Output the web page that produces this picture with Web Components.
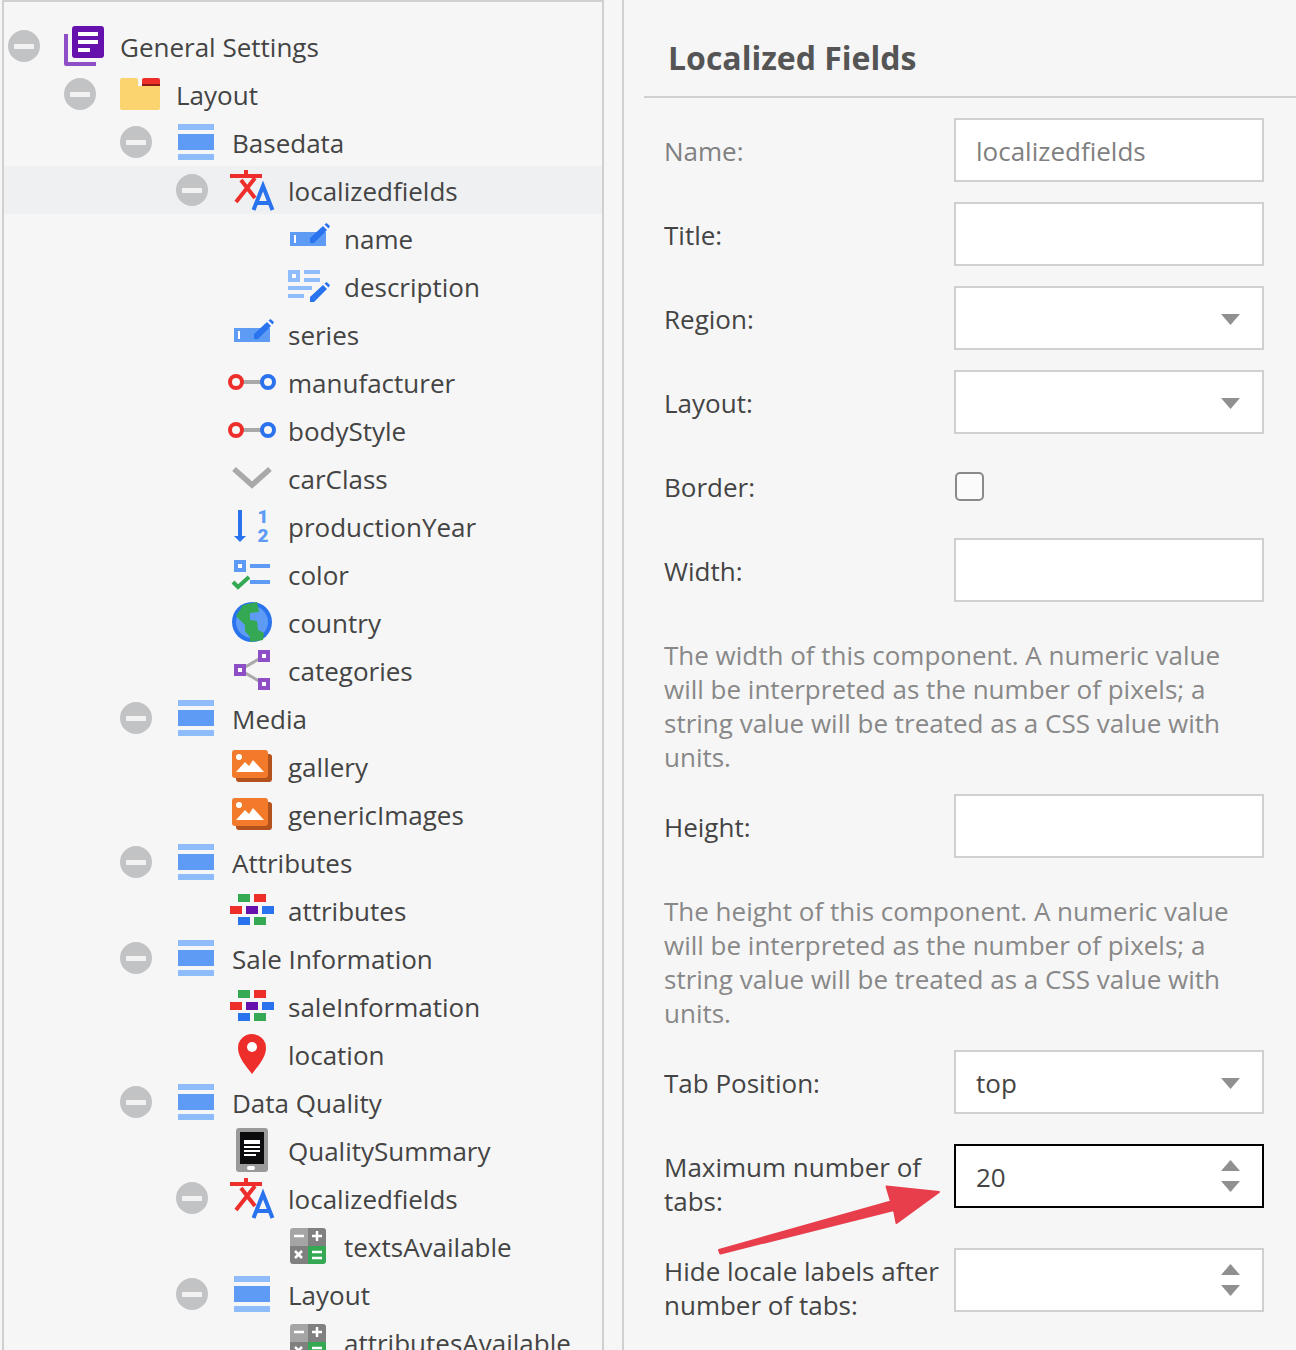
<!DOCTYPE html>
<html>
<head>
<meta charset="utf-8">
<title>Localized Fields</title>
<style>
  html, body { margin: 0; height: 1350px; overflow: hidden; background: #f6f6f6; }
  body { font-family: "Open Sans", "Liberation Sans", sans-serif; color: #444; }
</style>
</head>
<body>
<app-shell>
  <tree-panel slot="tree">
    <tree-row level="0" icon="book" toggle>General Settings</tree-row>
    <tree-row level="1" icon="folder" toggle>Layout</tree-row>
    <tree-row level="2" icon="form" toggle>Basedata</tree-row>
    <tree-row level="3" icon="translate" toggle selected>localizedfields</tree-row>
    <tree-row level="4" icon="input">name</tree-row>
    <tree-row level="4" icon="textarea">description</tree-row>
    <tree-row level="3" icon="input">series</tree-row>
    <tree-row level="3" icon="relation">manufacturer</tree-row>
    <tree-row level="3" icon="relation">bodyStyle</tree-row>
    <tree-row level="3" icon="chevron">carClass</tree-row>
    <tree-row level="3" icon="sort">productionYear</tree-row>
    <tree-row level="3" icon="checklist">color</tree-row>
    <tree-row level="3" icon="globe">country</tree-row>
    <tree-row level="3" icon="share">categories</tree-row>
    <tree-row level="2" icon="form" toggle>Media</tree-row>
    <tree-row level="3" icon="picture">gallery</tree-row>
    <tree-row level="3" icon="picture">genericImages</tree-row>
    <tree-row level="2" icon="form" toggle>Attributes</tree-row>
    <tree-row level="3" icon="blocks">attributes</tree-row>
    <tree-row level="2" icon="form" toggle>Sale Information</tree-row>
    <tree-row level="3" icon="blocks">saleInformation</tree-row>
    <tree-row level="3" icon="pin">location</tree-row>
    <tree-row level="2" icon="form" toggle>Data Quality</tree-row>
    <tree-row level="3" icon="tablet">QualitySummary</tree-row>
    <tree-row level="3" icon="translate" toggle>localizedfields</tree-row>
    <tree-row level="4" icon="calc">textsAvailable</tree-row>
    <tree-row level="3" icon="form" toggle>Layout</tree-row>
    <tree-row level="4" icon="calc">attributesAvailable</tree-row>
  </tree-panel>
  <form-panel slot="form" heading="Localized Fields">
    <form-row label="Name:" disabled><form-field value="localizedfields" disabled></form-field></form-row>
    <form-row label="Title:"><form-field></form-field></form-row>
    <form-row label="Region:"><form-field kind="select"></form-field></form-row>
    <form-row label="Layout:"><form-field kind="select"></form-field></form-row>
    <form-row label="Border:"><form-field kind="check"></form-field></form-row>
    <form-row label="Width:"><form-field></form-field></form-row>
    <help-text>The width of this component. A numeric value will be interpreted as the number of pixels; a string value will be treated as a CSS value with units.</help-text>
    <form-row label="Height:"><form-field></form-field></form-row>
    <help-text>The height of this component. A numeric value will be interpreted as the number of pixels; a string value will be treated as a CSS value with units.</help-text>
    <form-row label="Tab Position:" style="margin-bottom:30px"><form-field kind="select" value="top"></form-field></form-row>
    <form-row label="Maximum number of tabs:" two><form-field kind="spin" value="20" focused></form-field></form-row>
    <form-row label="Hide locale labels after number of tabs:" two><form-field kind="spin"></form-field></form-row>
    <callout-arrow></callout-arrow>
  </form-panel>
</app-shell>

<script>
// all icons share a 48x48 box at the start of the icon column
const LIGHT = '#8fbcfa', MID = '#5e9bf5', BLUE = '#2a73ee', RED = '#ee2e2a', GREEN = '#34a853', PURPLE = '#8e4ec6', GREY = '#a9a9a9';

const pencil = (x, y) => `<g transform="translate(${x} ${y})" fill="${BLUE}">
  <polygon points="0,20 0,15 13,3 17,7 4,20"/><polygon points="14.500,1.500 16.500,0 20,3 18.500,5.500"/></g>`;

const purpleBox = (x, y) => `<rect x="${x}" y="${y}" width="12" height="12" fill="${PURPLE}"/><rect x="${x + 4}" y="${y + 4}" width="4" height="4" fill="#fff"/>`;

const blocks = (mid) => `<rect x="6" y="8" width="12" height="8" fill="${GREEN}"/><rect x="22" y="8" width="12" height="8" fill="${RED}"/>
  <rect x="-2" y="20" width="12" height="8" fill="${RED}"/><rect x="14" y="20" width="12" height="8" fill="${mid}"/><rect x="30" y="20" width="12" height="8" fill="${BLUE}"/>
  <rect x="6" y="31" width="12" height="8" fill="${BLUE}"/><rect x="22" y="31" width="12" height="8" fill="${GREEN}"/>`;

const ICONS = {
  book: `<rect x="8" y="4" width="32" height="32" rx="3" fill="#6610ad"/>
    <path d="M14 10h20v4H14zM14 18h20v4H14zM14 26h12v4H14z" fill="#fff"/>
    <path d="M0 12h4v28h28v4H2a2 2 0 0 1-2-2z" fill="${PURPLE}"/>`,
  folder: `<path d="M2 8h14a2 2 0 0 1 2 2v6h22v22a2 2 0 0 1-2 2H2a2 2 0 0 1-2-2V10a2 2 0 0 1 2-2z" fill="#fbd46f"/>
    <path d="M22 14V10a2 2 0 0 1 2-2h14a2 2 0 0 1 2 2v4z" fill="${RED}"/><rect x="22" y="14" width="18" height="2" fill="#8c1a14"/>`,
  form: `<rect x="2" y="6" width="36" height="6" fill="${LIGHT}"/><rect x="2" y="16" width="36" height="16" fill="${MID}"/><rect x="2" y="36" width="36" height="6" fill="${LIGHT}"/>`,
  translate: `<rect x="-2" y="8" width="32" height="4" fill="${RED}"/><rect x="12" y="4" width="4" height="4" fill="${RED}"/>
    <path d="M23 12 4 36M9 14l14 18" fill="none" stroke="${RED}" stroke-width="4"/>
    <path d="M21.500 44 31 20l9.500 24M25 37h12" fill="none" stroke="${BLUE}" stroke-width="4"/>`,
  input: `<rect x="2" y="18" width="36" height="14" fill="${MID}"/><rect x="6" y="21" width="2" height="8" fill="#fff"/>${pencil(22, 9)}`,
  textarea: `<rect x="0" y="8" width="12" height="12" fill="${LIGHT}"/><rect x="4" y="12" width="4" height="4" fill="#fff"/>
    <path d="M16 8h16v4H16zM16 16h16v4H16zM0 24h24v4H0zM0 32h16v4H0z" fill="${LIGHT}"/>${pencil(22, 20)}`,
  relation: `<rect x="10" y="22" width="20" height="4" fill="${GREY}"/>
    <circle cx="4" cy="24" r="6" fill="none" stroke="${RED}" stroke-width="4"/><circle cx="36" cy="24" r="6" fill="none" stroke="${BLUE}" stroke-width="4"/>`,
  chevron: `<path d="M2 15l18 16 18-16" fill="none" stroke="${GREY}" stroke-width="5.500"/>`,
  sort: `<rect x="6" y="8" width="4" height="28" fill="${BLUE}"/><polygon points="2,34 14,34 8,40" fill="${BLUE}"/>
    <text x="31" y="21" text-anchor="middle" font-family="Roboto, sans-serif" font-weight="900" font-size="19" fill="${MID}">1</text>
    <text x="31" y="40" text-anchor="middle" font-family="Roboto, sans-serif" font-weight="900" font-size="19" fill="${MID}">2</text>`,
  checklist: `<rect x="2" y="10" width="12" height="12" fill="${MID}"/><rect x="6" y="14" width="4" height="4" fill="#fff"/>
    <path d="M18 14h20v4H18zM18 30h20v4H18z" fill="${MID}"/><path d="M1 32l5 5 11-10" fill="none" stroke="${GREEN}" stroke-width="4"/>`,
  globe: `<circle cx="20" cy="24" r="20" fill="${BLUE}"/><circle cx="20" cy="24" r="16" fill="${MID}"/>
    <polygon points="4,18 11,7 25,4 27,14 18,15 18,22 25,23 26,32 32,35 31,42 18,44 18,39 13,33 13,27" fill="${GREEN}"/>`,
  share: `<path d="M32 10 8 24l24 14" fill="none" stroke="${GREY}" stroke-width="3"/>${purpleBox(26, 4)}${purpleBox(2, 18)}${purpleBox(26, 32)}`,
  picture: `<rect x="4" y="12" width="36" height="28" rx="3" fill="#b4521e"/><rect x="0" y="8" width="36" height="28" rx="3" fill="#f27a2a"/>
    <circle cx="7" cy="15" r="3" fill="#fff"/><polygon points="4,30 13,20 17,24 21,18 32,30" fill="#fff"/>`,
  blocks: blocks('#6610ad'),
  pin: `<path d="M20 4a14 14 0 0 1 14 14c0 10-9 19-14 26C15 37 6 28 6 18A14 14 0 0 1 20 4z" fill="${RED}"/><circle cx="20" cy="17" r="5" fill="#fff"/>`,
  tablet: `<rect x="4" y="2" width="32" height="44" rx="3" fill="#9a9a9a"/><rect x="8" y="6" width="24" height="32" fill="#0c0c0e"/>
    <path d="M12 14h16v4H12zM12 20h16v2H12zM12 24h16v2H12zM12 28h12v2H12z" fill="#fff"/><rect x="15" y="40" width="8" height="4" rx="2" fill="#fff"/>`,
  calc: `<path d="M20 6H5a3 3 0 0 0-3 3v15h18z" fill="#a5a5a5"/><path d="M20 6h15a3 3 0 0 1 3 3v15H20z" fill="#808080"/>
    <path d="M20 24H2v15a3 3 0 0 0 3 3h15z" fill="#808080"/><path d="M20 24h18v15a3 3 0 0 1-3 3H20z" fill="${GREEN}"/>
    <path d="M6 14h10M24 14h10M29 9v10M7 29l7 7M14 29l-7 7M24 30h10M24 36h10" fill="none" stroke="#fff" stroke-width="2.500"/>`
};

class AppShell extends HTMLElement {
  constructor() {
    super();
    this.attachShadow({ mode: 'open' });
    this.shadowRoot.innerHTML = `
      <style>
        :host { display: flex; height: 1350px; padding-left: 2px; box-sizing: border-box; gap: 18px; overflow: hidden; }
      </style>
      <slot name="tree"></slot>
      <slot name="form"></slot>`;
  }
}

class TreePanel extends HTMLElement {
  constructor() {
    super();
    this.attachShadow({ mode: 'open' });
    this.shadowRoot.innerHTML = `
      <style>
        :host { display: block; flex: none; width: 602px; height: 1350px; box-sizing: border-box;
                border: solid #d0d0d0; border-width: 2px 2px 0; padding-top: 20px; overflow: hidden; }
      </style>
      <slot></slot>`;
  }
}

class TreeRow extends HTMLElement {
  constructor() {
    super();
    this.attachShadow({ mode: 'open' });
  }

  connectedCallback() {
    const level = Number(this.getAttribute('level') || 0);
    const toggle = this.hasAttribute('toggle') ? '<span class="toggle"><i></i></span>' : '';
    this.shadowRoot.innerHTML = `
      <style>
        :host { display: block; height: 48px; font-size: 26px; color: #444; }
        :host([selected]) { background: #eff0f2; }
        .row { display: flex; align-items: center; height: 48px; margin-left: ${4 + 56 * level}px; white-space: nowrap; }
        .slot-toggle { flex: none; width: 56px; }
        .toggle { display: flex; align-items: center; justify-content: center; width: 32px; height: 32px; border-radius: 50%; background: #c2c3c5; }
        .toggle i { display: block; width: 20px; height: 5px; background: #f2f2f2; }
        svg { flex: none; width: 48px; height: 48px; margin-right: 8px; overflow: visible; display: block; }
        .text { position: relative; top: 1px; }
      </style>
      <div class="row">
        <div class="slot-toggle">${toggle}</div>
        <svg viewBox="0 0 48 48">${ICONS[this.getAttribute('icon')] || ''}</svg>
        <span class="text"><slot></slot></span>
      </div>`;
  }
}

class FormPanel extends HTMLElement {
  constructor() {
    super();
    this.attachShadow({ mode: 'open' });
  }

  connectedCallback() {
    this.shadowRoot.innerHTML = `
      <style>
        :host { display: block; position: relative; flex: 1; min-width: 0; height: 1350px; box-sizing: border-box;
                border-left: 2px solid #d0d0d0; padding-left: 20px; }
        h2 { margin: 0; height: 98px; box-sizing: border-box; padding: 35px 0 0 24px; font-size: 32px; line-height: 46px; font-weight: 700; color: #555; border-bottom: 2px solid #d0d0d0; }
        .body { padding: 20px 32px 0 20px; }
      </style>
      <h2>${this.getAttribute('heading')}</h2>
      <div class="body"><slot></slot></div>`;
  }
}

class FormRow extends HTMLElement {
  constructor() {
    super();
    this.attachShadow({ mode: 'open' });
  }

  connectedCallback() {
    this.shadowRoot.innerHTML = `
      <style>
        :host { display: flex; margin-bottom: 20px; font-size: 26px; line-height: 34px; color: #444; }
        :host([disabled]) { color: #808080; }
        .label { flex: none; width: 290px; box-sizing: border-box; padding: 16px 12px 14px 0; }
        :host([two]) .label { padding: 6px 12px 10px 0; }
      </style>
      <div class="label">${this.getAttribute('label')}</div>
      <slot></slot>`;
  }
}

class FormField extends HTMLElement {
  constructor() {
    super();
    this.attachShadow({ mode: 'open' });
  }

  connectedCallback() {
    const kind = this.getAttribute('kind') || 'text';
    const arrowUp = '<svg class="a" style="top:14px" viewBox="0 0 19 11"><polygon points="9.500,0 19,11 0,11"/></svg>';
    const arrowDown = (top) => `<svg class="a" style="top:${top}px" viewBox="0 0 19 11"><polygon points="0,0 19,0 9.500,11"/></svg>`;
    let trigger = '';
    if (kind === 'select') trigger = arrowDown(26);
    if (kind === 'spin') trigger = arrowUp + arrowDown(35);
    this.shadowRoot.innerHTML = kind === 'check' ? `
      <style>
        :host { display: flex; align-items: center; height: 64px; }
        i { display: block; width: 29px; height: 29px; box-sizing: border-box; margin-left: 1px; border: 2.500px solid #8a8a8a; border-radius: 5px; background: #fbfbfb; }
      </style>
      <i></i>` : `
      <style>
        :host { display: block; position: relative; flex: none; width: 310px; height: 64px; box-sizing: border-box; background: #fff;
                border: 2px solid #d0d0d0; padding: 0 20px; font-size: 26px; line-height: 62px; color: #444; }
        :host([disabled]) { color: #808080; }
        :host([focused]) { border-color: #000; }
        .a { position: absolute; right: 22px; width: 19px; height: 11px; }
        .a polygon { fill: #909090; }
      </style>
      ${this.getAttribute('value') || ''}${trigger}`;
  }
}

class HelpText extends HTMLElement {
  constructor() {
    super();
    this.attachShadow({ mode: 'open' });
    this.shadowRoot.innerHTML = `
      <style>
        :host { display: block; margin: 36px 0 20px; font-size: 26px; line-height: 34px; color: #888; }
      </style>
      <slot></slot>`;
  }
}

// red annotation laid over the form, coordinates are the panel's own
class CalloutArrow extends HTMLElement {
  constructor() {
    super();
    this.attachShadow({ mode: 'open' });
    this.shadowRoot.innerHTML = `
      <style>
        :host { position: absolute; left: 70px; top: 1160px; width: 260px; height: 110px; pointer-events: none; }
        svg { display: block; width: 100%; height: 100%; }
      </style>
      <svg viewBox="0 0 260 110"><polygon fill="#e83e4c" stroke="#e83e4c" stroke-width="2" stroke-linejoin="round"
        points="25,90 26.500,93.500 200,50 202.500,63 245,32 192.500,26.500 197,41.500"/></svg>`;
  }
}

customElements.define('app-shell', AppShell);
customElements.define('tree-panel', TreePanel);
customElements.define('tree-row', TreeRow);
customElements.define('form-panel', FormPanel);
customElements.define('form-row', FormRow);
customElements.define('form-field', FormField);
customElements.define('help-text', HelpText);
customElements.define('callout-arrow', CalloutArrow);
</script>
</body>
</html>
